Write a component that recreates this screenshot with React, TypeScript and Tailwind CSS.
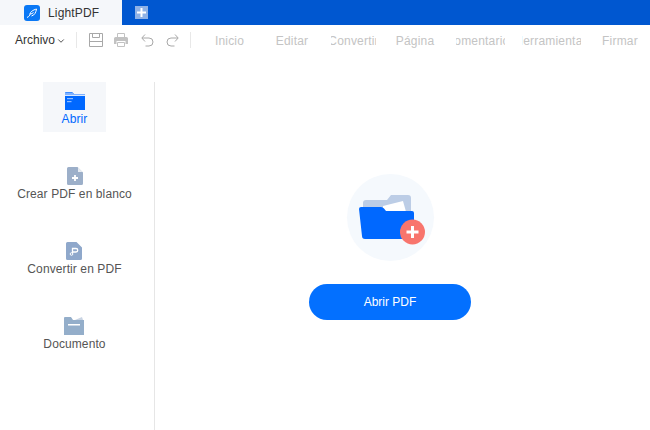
import React from 'react';
import { ChevronDown } from 'lucide-react';

// the narrow tabs clip their labels, as in the app's toolbar
const navItems = [
  { label: 'Inicio', width: 'w-[63px]' },
  { label: 'Editar', width: 'w-[62px]' },
  { label: 'Convertir', width: 'w-[45px] ml-[8px]' },
  { label: 'Página', width: 'w-[62px] ml-[8px]' },
  { label: 'Comentarios', width: 'w-[49px] ml-[10px]' },
  { label: 'Herramientas', width: 'w-[59px] ml-[17px]' },
  { label: 'Firmar', width: 'w-[60px] ml-[9px]' },
];

const FolderIcon = () => (
  <svg width="20" height="18" viewBox="0 0 20 18">
    <path d="M0 1a1 1 0 0 1 1-1h6l2 2h10a1 1 0 0 1 1 1v15H0z" fill="#0068ff" />
    <path d="M0 0.500h7l2 1.500h11v1H0z" fill="#7fb2ff" />
    <rect x="0" y="3" width="20" height="1" fill="#d8e8ff" />
    <rect x="2" y="6" width="6" height="1.200" fill="#8fbcff" />
    <rect x="2" y="9" width="4.500" height="1.200" fill="#8fbcff" />
  </svg>
);

const NewFileIcon = () => (
  <svg width="16" height="18" viewBox="0 0 16 18">
    <path d="M1.500 0H10.500L16 5.500V16.500a1.500 1.500 0 0 1-1.500 1.500H1.500A1.500 1.500 0 0 1 0 16.500V1.500A1.500 1.500 0 0 1 1.500 0z" fill="#9cafc9" />
    <path d="M11 0.500L15.500 5H11z" fill="#e6ebf2" />
    <path d="M8 8v6M5 11h6" stroke="#fff" strokeWidth="1.800" />
  </svg>
);

const ConvertIcon = () => (
  <svg width="16" height="18" viewBox="0 0 16 18">
    <path d="M1.500 0H10.500L16 5.500V16.500a1.500 1.500 0 0 1-1.500 1.500H1.500A1.500 1.500 0 0 1 0 16.500V1.500A1.500 1.500 0 0 1 1.500 0z" fill="#8fa8cb" />
    <path d="M6.500 11V6.500h3.500a1.500 1.500 0 0 1 0 3.500H7" stroke="#fff" strokeWidth="1.300" fill="none" />
    <circle cx="5.500" cy="12" r="1.300" stroke="#fff" strokeWidth="1" fill="none" />
  </svg>
);

const DocumentIcon = () => (
  <svg width="20" height="18" viewBox="0 0 20 18">
    <path d="M11 3 L18 0 L19 3z" fill="#c9d4e3" />
    <path d="M0 1a1 1 0 0 1 1-1h6l2 3h11v15H0z" fill="#94aeca" />
    <rect x="4" y="7" width="12" height="1.500" fill="#fff" />
  </svg>
);

const sideItems = [
  { label: 'Abrir', icon: <FolderIcon />, active: true },
  { label: 'Crear PDF en blanco', icon: <NewFileIcon /> },
  { label: 'Convertir en PDF', icon: <ConvertIcon /> },
  { label: 'Documento', icon: <DocumentIcon /> },
];

export default function App() {
  return (
    <div className="w-[650px] h-[430px] overflow-hidden bg-white flex flex-col font-['Liberation_Sans',sans-serif]">
      <div className="h-[25px] bg-[#0057d0] flex items-center shrink-0">
        <div className="w-[122px] h-full bg-[#f5f7fa] flex items-center pl-6 gap-2">
          <div className="w-4 h-4 rounded-[3px] bg-[#0a78f5] flex items-center justify-center">
            <svg width="12" height="12" viewBox="0 0 12 12" fill="none">
              <path d="M1 10.500C3 9.500 4 8.500 4 7 4 5 7 3 10.500 2 10 5 9 8 5.500 9M4 7C5.500 7 6.500 6.500 7.500 5.500" stroke="#fff" strokeWidth="1" />
            </svg>
          </div>
          <span className="text-xs text-[#333] tracking-[0.15px]">LightPDF</span>
        </div>
        <div className="ml-[13px] w-[13px] h-[13px] bg-[#8fb2e6] flex items-center justify-center">
          <svg width="9" height="9" viewBox="0 0 9 9">
            <path d="M4.500 0v9M0 4.500h9" stroke="#fff" strokeWidth="2" />
          </svg>
        </div>
      </div>

      <div className="h-[30px] flex items-center shrink-0">
        <div className="pl-[15px] flex items-center text-xs text-[#333] w-[76px] shrink-0">
          Archivo
          <ChevronDown className="w-[10px] h-[10px] ml-[1px] mt-[2px]" strokeWidth={2} />
        </div>
        <div className="w-px h-[16px] bg-[#e8e8e8] shrink-0" />
        <div className="flex items-center gap-[11px] ml-3 shrink-0">
          <svg width="14" height="14" viewBox="0 0 14 14" fill="none" stroke="#a8a8a8">
            <path d="M0.500 0.500h13v13h-13z" />
            <path d="M3.500 0.500v4h7v-4M0.500 8.500h13" />
          </svg>
          <svg width="14" height="14" viewBox="0 0 14 14" fill="#c2c2c2">
            <path d="M3.500 0.500h7v4h-7z" fill="none" stroke="#c2c2c2" />
            <path d="M1.500 4h11a1.500 1.500 0 0 1 1.500 1.500V11h-2.500V8h-9v3H0V5.500A1.500 1.500 0 0 1 1.500 4z" />
            <path d="M3.500 9.500h7v4h-7z" fill="none" stroke="#c2c2c2" />
          </svg>
          <svg width="13" height="13" viewBox="0 0 13 13" fill="none" stroke="#a8a8a8" className="ml-[2px]">
            <path d="M4 0.500L0.800 4 4 7.500M1 4H8a4 4 0 0 1 0 8H4.500" />
          </svg>
          <svg width="13" height="13" viewBox="0 0 13 13" fill="none" stroke="#a8a8a8" className="ml-[1px]">
            <path d="M9 0.500L12.200 4 9 7.500M12 4H5a4 4 0 0 0 0 8H8.500" />
          </svg>
        </div>
        <div className="w-px h-[16px] bg-[#e8e8e8] ml-[11px] shrink-0" />
        <div className="flex items-center ml-[7px] pt-[2px]">
          {navItems.map((item) => (
            <div key={item.label} className={`${item.width} shrink-0 overflow-hidden flex justify-center whitespace-nowrap text-xs tracking-[0.2px] text-[#c4c4c4]`}>
              {item.label}
            </div>
          ))}
        </div>
      </div>

      <div className="flex-1 flex pt-[27px]">
        <div className="w-[155px] border-r border-[#e6e6e6] flex flex-col items-center gap-[25px] shrink-0 pr-[5px]">
          {sideItems.map((item) => (
            <div
              key={item.label}
              className={`h-[50px] flex flex-col items-center pt-[10px] whitespace-nowrap tracking-[0.1px] ${item.active ? 'w-[63px] bg-[#f5f7fa] text-[#0068ff]' : 'text-[#555]'}`}
            >
              <div className="h-[18px] flex items-center">{item.icon}</div>
              <span className="text-xs mt-[1px]">{item.label}</span>
            </div>
          ))}
        </div>
        <div className="flex-1 flex flex-col items-center pt-[92px] pr-[25px]">
          <div className="w-[87px] h-[87px] rounded-full bg-[#f5f9fd] flex items-center justify-center">
            <svg width="87" height="87" viewBox="0 0 87 87">
              <path d="M16 29a3 3 0 0 1 3-3H40l4-5h17a3 3 0 0 1 3 3V50H16z" fill="#bccde6" />
              <path d="M36 32L56 27 61 45H36z" fill="#fff" />
              <path d="M12 35a2 2 0 0 1 2-2h20a4 4 0 0 1 3 1.500l2 2.500h26a2 2 0 0 1 2 2v22a4 4 0 0 1-4 4H18a3 3 0 0 1-3-3z" fill="#0068ff" />
              <circle cx="65.500" cy="58" r="12.500" fill="#f8756d" />
              <path d="M65.500 52v12M59.500 58h12" stroke="#fff" strokeWidth="3" />
            </svg>
          </div>
          <button className="mt-[23px] w-[162px] h-[36px] rounded-[18px] bg-[#0370ff] text-white text-xs">Abrir PDF</button>
        </div>
      </div>
    </div>
  );
}
